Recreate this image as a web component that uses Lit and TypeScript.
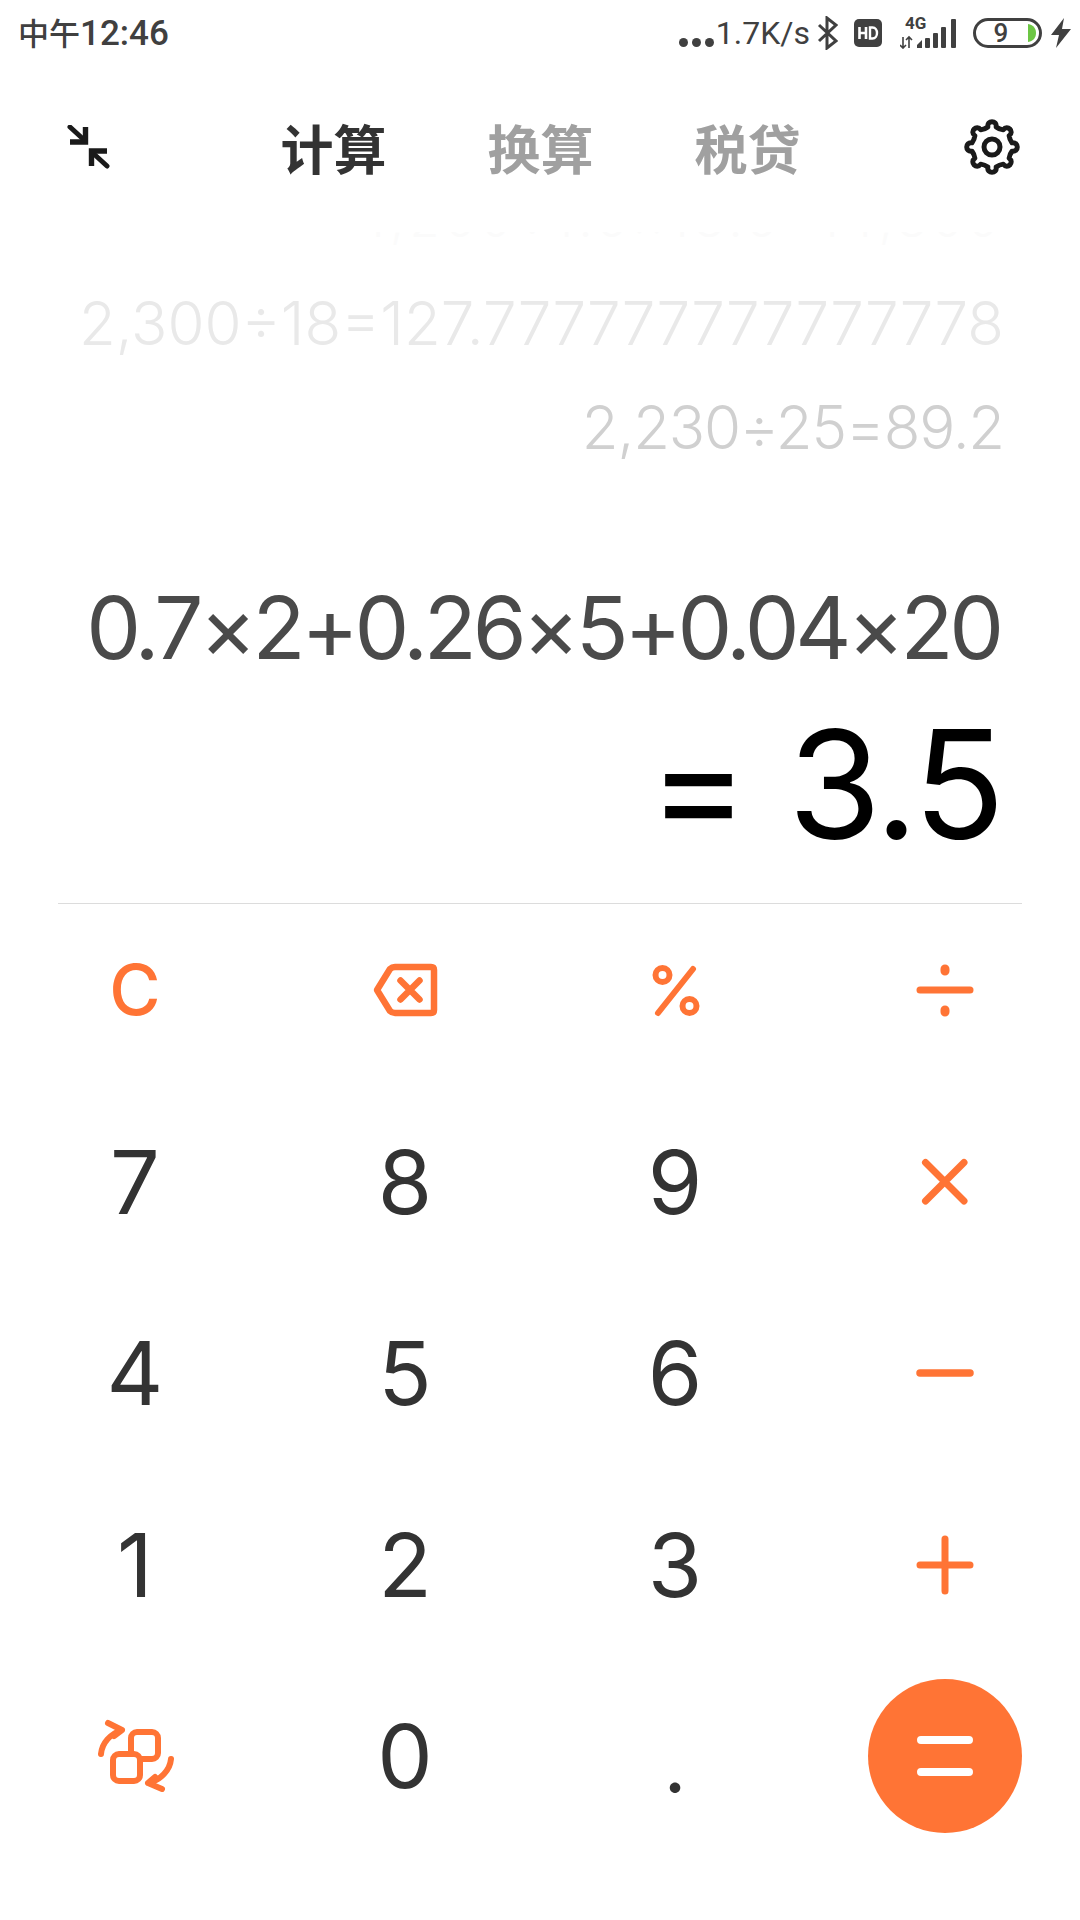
import { LitElement, html, css, svg } from "lit";
import { customElement } from "lit/decorators.js";

function gearPath(cx: number, cy: number, teeth: number, ro: number, ri: number): string {
  const pts: string[] = [];
  const step = (Math.PI * 2) / teeth;
  const p = (r: number, t: number) => `${(cx + r * Math.cos(t)).toFixed(2)} ${(cy + r * Math.sin(t)).toFixed(2)}`;
  for (let i = 0; i < teeth; i++) {
    const a = i * step - Math.PI / 2;
    const w = step * 0.26;
    pts.push(`${i === 0 ? "M" : "L"}${p(ri, a - w)}`);
    pts.push(`C${p(ro * 1.02, a - w * 0.95)} ${p(ro * 1.02, a + w * 0.95)} ${p(ri, a + w)}`);
    pts.push(`Q${p(ri * 0.93, a + step / 2)} ${p(ri, a + step - w)}`);
  }
  return pts.join(" ") + "Z";
}

const orange = "#ff7435";

@customElement("app-root")
export class AppRoot extends LitElement {
  static styles = css`
    :host {
      display: block;
      width: 1080px;
      height: 1920px;
      background: #fff;
      overflow: hidden;
      font-family: Inter, "Noto Sans CJK SC", sans-serif;
    }
    svg { display: block; flex: none; }
    .status {
      height: 66px;
      display: flex;
      align-items: center;
      justify-content: space-between;
      padding: 0 9px 0 18px;
      color: #404040;
    }
    .time { font: 500 31px/66px "Noto Sans CJK SC", sans-serif; }
    .time span { font-family: Roboto, sans-serif; font-weight: 500; font-size: 35px; }
    .indicators { display: flex; align-items: center; height: 66px; }
    .dots { display: flex; gap: 4px; align-self: flex-end; margin-bottom: 19px; margin-right: 2px; }
    .dots i { width: 9px; height: 9px; border-radius: 50%; background: #404040; display: block; }
    .speed { font: 400 32px/66px Roboto, sans-serif; margin-right: 7px; }
    .bt { margin-right: 16px; }
    .hd { margin-right: 18px; }
    .sig { margin-right: 15px; margin-bottom: 4px; }
    .batt {
      width: 69px;
      height: 30px;
      box-sizing: border-box;
      border: 3px solid #404040;
      border-radius: 15px;
      display: flex;
      align-items: center;
      margin-right: 9px;
    }
    .batt b { font: 500 26px/24px Roboto, sans-serif; width: 50px; text-align: center; }
    .batt svg { margin-left: 2px; }
    .header {
      height: 162px;
      padding: 0 59px 0 66px;
      display: grid;
      grid-template-columns: 1fr auto 1fr;
      align-items: center;
    }
    .gear { justify-self: end; }
    .tabs {
      display: flex;
      gap: 101px;
      font: 700 53px/60px "Noto Sans CJK SC", sans-serif;
      color: #a0a0a0;
      margin-left: -6px;
    }
    .tabs .on { color: #333; }
    .history {
      margin-top: 4px;
      height: 247px;
      overflow: hidden;
      display: flex;
      flex-direction: column;
      justify-content: flex-end;
      padding-right: 76px;
      align-items: flex-end;
      font: 300 60px/104px Inter, sans-serif;
      white-space: nowrap;
    }
    .h0 { color: #fbfbfb; font-size: 48px; line-height: 48px; letter-spacing: 6px; margin-bottom: 27px; }
    .h1 { color: #e9e9e9; }
    .h2 { color: #d0d0d0; letter-spacing: -1.2px; }
    .expr {
      margin-top: 99px;
      padding-right: 80px;
      text-align: right;
      font: 400 87px/100px Inter, sans-serif;
      letter-spacing: -4.25px;
      color: #4a4a4a;
      white-space: nowrap;
    }
    .result {
      margin-top: 26px;
      padding-right: 78px;
      text-align: right;
      font: 400 151px/160px Inter, sans-serif;
      letter-spacing: -3px;
      word-spacing: 3px;
      color: #000;
      white-space: nowrap;
    }
    .rule { height: 1px; margin: 39px 58px 0; background: #dcdcdc; }
    .keys {
      display: grid;
      grid-template-columns: repeat(4, 270px);
      justify-content: center;
      grid-auto-rows: 172px;
      row-gap: 19.5px;
    }
    .k {
      display: flex;
      align-items: center;
      justify-content: center;
      font: 400 88px/90px Inter, sans-serif;
      color: #333;
    }
    .c { color: #ff7435; font-size: 70px; font-weight: 500; }
    .point { font-size: 80px; padding-top: 14px; }
    .eq {
      width: 154px;
      height: 154px;
      border-radius: 50%;
      background: #ff7435;
      display: flex;
      align-items: center;
      justify-content: center;
    }
  `;

  private stroke(w: number, body: unknown, size = 80, label = "") {
    return html`<svg width=${size} height=${size} viewBox="0 0 ${size} ${size}" fill="none" stroke=${orange}
      stroke-width=${w} stroke-linecap="round" stroke-linejoin="round" role="img" aria-label=${label}>${body}</svg>`;
  }

  render() {
    return html`
      <div class="status">
        <div class="time">中午<span>12:46</span></div>
        <div class="indicators">
          <div class="dots"><i></i><i></i><i></i></div>
          <div class="speed">1.7K/s</div>
          <svg class="bt" width="21" height="34" viewBox="0 0 21 34" fill="none" stroke="#404040" stroke-width="3">
            <path d="M2 9 19 25 10 32V2l9 7L2 25" />
          </svg>
          <svg class="hd" width="28" height="28" viewBox="0 0 28 28">
            <rect width="28" height="28" rx="5" fill="#404040" />
            <path d="M5.5 8v12M12 8v12M5.5 14H12" stroke="#fff" stroke-width="2.6" fill="none" />
            <path d="M16 8.5v11h2.5c6 0 6-11 0-11Z" stroke="#fff" stroke-width="2.4" fill="none" />
          </svg>
          <svg class="sig" width="58" height="36" viewBox="0 -4 58 36">
            <text x="5" y="12" font-family="Roboto" font-weight="700" font-size="17" fill="#404040">4G</text>
            <path d="M3 20v11M0 28l3 3 3-3M9 31V20M6 23l3-3 3 3" stroke="#404040" stroke-width="1.6" fill="none" />
            <path d="M17 31v-3l5-5v8Z" fill="#404040" />
            <rect x="25" y="21" width="5" height="10" rx="1" fill="#404040" />
            <rect x="33" y="16" width="5" height="15" rx="1" fill="#404040" />
            <rect x="41" y="10" width="5" height="21" rx="1" fill="#404040" />
            <rect x="51" y="2" width="5" height="29" rx="1" fill="#404040" />
          </svg>
          <div class="batt">
            <b>9</b>
            <svg width="8" height="18" viewBox="0 0 8 18"><path d="M0 0C6 1 8 5 8 9S6 17 0 18Z" fill="#6cc644" /></svg>
          </div>
          <svg width="20" height="30" viewBox="0 0 20 30"><path d="M13 0 0 17h8L5 30l15-19h-9Z" fill="#404040" /></svg>
        </div>
      </div>

      <div class="header">
        <svg width="44" height="44" viewBox="0 0 44 44" fill="none" stroke="#1a1a1a" stroke-width="5" stroke-linecap="round">
          <path d="M4 2 16 13" />
          <path d="M4 17H19.5V2" stroke-linecap="butt" stroke-width="5.4" />
          <path d="M41 41 29 30" />
          <path d="M41 26H25.5V41" stroke-linecap="butt" stroke-width="5.4" />
        </svg>
        <div class="tabs"><span class="on">计算</span><span>换算</span><span>税贷</span></div>
        <svg class="gear" width="58" height="58" viewBox="0 0 58 58" fill="none" stroke="#1a1a1a" stroke-width="5" stroke-linejoin="round">
          <path d=${gearPath(29, 29, 8, 27, 20.5)} />
          <circle cx="29" cy="29" r="8" />
        </svg>
      </div>

      <div class="history">
        <div class="h0">1,200÷1.5×18.5=14,800</div>
        <div class="h1">2,300÷18=127.777777777777778</div>
        <div class="h2">2,230÷25=89.2</div>
      </div>
      <div class="expr">0.7×2+0.26×5+0.04×20</div>
      <div class="result">= 3.5</div>
      <div class="rule"></div>

      <div class="keys">
        <div class="k c">C</div>
        <div class="k">${this.stroke(6.5, svg`
          <path d="M9 37 22 16Q24 14 27 14H63Q66 14 66 17V57Q66 60 63 60H27Q24 60 22 58Z" />
          <path d="M32.5 27.5 51.5 46.5M51.5 27.5 32.5 46.5" />`, 74, "退格")}</div>
        <div class="k">${this.stroke(6, svg`
          <circle cx="17.5" cy="15" r="7" /><circle cx="44.5" cy="46" r="7" />
          <path d="M48 9 13 53" />`, 60, "%")}</div>
        <div class="k">${this.stroke(7, svg`
          <path d="M5 30H55" /><path d="M30 9V11M30 50V52" stroke-width="9" />`, 60, "÷")}</div>

        <div class="k">7</div><div class="k">8</div><div class="k">9</div>
        <div class="k">${this.stroke(7, svg`<path d="M10.5 10.5 49 49M49 10.5 10.5 49" />`, 60, "×")}</div>

        <div class="k">4</div><div class="k">5</div><div class="k">6</div>
        <div class="k">${this.stroke(7.5, svg`<path d="M5 30H55" />`, 60, "−")}</div>

        <div class="k">1</div><div class="k">2</div><div class="k">3</div>
        <div class="k">${this.stroke(7, svg`<path d="M5 30H55M30 4V56" />`, 60, "+")}</div>

        <div class="k">${this.stroke(6, svg`
          <rect x="41" y="21" width="27" height="27" rx="6" />
          <rect x="23" y="43" width="27" height="27" rx="6" fill="#fff" />
          <path d="M11 43C12 32 20 23 32 19M18 12 32 19 24 25" />
          <path d="M81 48C80 59 71 69 58 72M72 78 58 72 65 66" />`, 90, "切换")}</div>
        <div class="k">0</div><div class="k point">.</div>
        <div class="k"><div class="eq">
          <svg width="60" height="40" viewBox="0 0 60 40" stroke="#fff" stroke-width="8" stroke-linecap="round">
            <path d="M6 4H54M6 36H54" />
          </svg>
        </div></div>
      </div>
    `;
  }
}
